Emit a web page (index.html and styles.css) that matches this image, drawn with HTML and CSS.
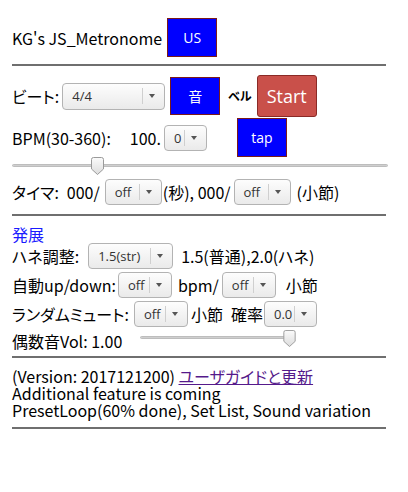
FILE: index.html
```html
<!DOCTYPE html>
<html lang="ja">
<head>
<meta charset="utf-8">
<title>KG's JS_Metronome</title>
<link rel="stylesheet" href="styles.css">
</head>
<body>
<div class="page">
  <div class="row r1">
    <span class="title">KG's JS_Metronome</span>
    <span class="btn blue b-us">US</span>
  </div>
  <hr class="rule">
  <div class="row r2">
    <span>ビート:</span>
    <span class="sel w-beat"><span class="v">4/4</span><span class="arr"></span></span>
    <span class="btn blue b-oto">音</span>
    <span class="bell">ベル</span>
    <span class="btn start">Start</span>
  </div>
  <div class="row r3">
    <span>BPM(30-360):</span>
    <span class="bpm">100.</span>
    <span class="sel w-dec"><span class="v">0</span><span class="arr"></span></span>
    <span class="btn blue b-tap">tap</span>
  </div>
  <div class="slider s-bpm">
    <div class="track"></div>
    <svg class="thumb" style="left:79px" width="13" height="18" viewBox="0 0 13 18"><defs><linearGradient id="tg" x1="0" y1="0" x2="0" y2="1"><stop offset="0" stop-color="#fbfbfb"/><stop offset="1" stop-color="#dcdcdc"/></linearGradient></defs><path d="M2.5 0.5 H10.5 Q12.5 0.5 12.5 2.5 V12 L6.5 17.5 L0.5 12 V2.5 Q0.5 0.5 2.5 0.5 Z" fill="url(#tg)" stroke="#9a9a9a"/></svg>
  </div>
  <div class="row r4">
    <span>タイマ:</span>
    <span class="ml8">000/</span>
    <span class="sel w-off57 ml5"><span class="v">off</span><span class="arr"></span></span>
    <span class="ml1">(秒), 000/</span>
    <span class="sel w-off57 ml3"><span class="v">off</span><span class="arr"></span></span>
    <span class="ml6">(小節)</span>
  </div>
  <hr class="rule rule2">
  <div class="dev">発展</div>
  <div class="row r5">
    <span>ハネ調整:</span>
    <span class="sel w-hane ml9"><span class="v">1.5(str)</span><span class="arr"></span></span>
    <span class="ml8">1.5(普通),2.0(ハネ)</span>
  </div>
  <div class="row r6">
    <span>自動up/down:</span>
    <span class="sel w-off54 ml2"><span class="v">off</span><span class="arr"></span></span>
    <span class="ml6">bpm/</span>
    <span class="sel w-off54 ml3"><span class="v">off</span><span class="arr"></span></span>
    <span class="ml10">小節</span>
  </div>
  <div class="row r6">
    <span>ランダムミュート:</span>
    <span class="sel w-off54 ml5"><span class="v">off</span><span class="arr"></span></span>
    <span class="ml3">小節</span>
    <span class="ml8">確率</span>
    <span class="sel w-rate ml1"><span class="v">0.0</span><span class="arr"></span></span>
  </div>
  <div class="row r7">
    <span>偶数音Vol: 1.00</span>
    <div class="slider s-vol">
      <div class="track"></div>
      <svg class="thumb" style="left:143px" width="13" height="17" viewBox="0 0 13 18"><defs><linearGradient id="tg2" x1="0" y1="0" x2="0" y2="1"><stop offset="0" stop-color="#fbfbfb"/><stop offset="1" stop-color="#dcdcdc"/></linearGradient></defs><path d="M2.5 0.5 H10.5 Q12.5 0.5 12.5 2.5 V12 L6.5 17.5 L0.5 12 V2.5 Q0.5 0.5 2.5 0.5 Z" fill="url(#tg2)" stroke="#9a9a9a"/></svg>
    </div>
  </div>
  <hr class="rule rule3">
  <div class="info">
    <div>(Version: 2017121200) <a class="guide" href="#">ユーザガイドと更新</a></div>
    <div>Additional feature is coming</div>
    <div>PresetLoop(60% done), Set List, Sound variation</div>
  </div>
  <hr class="rule rule4">
</div>
</body>
</html>
```

FILE: styles.css
```css
html, body {
  margin: 0;
  padding: 0;
  background: #ffffff;
}
body {
  font-family: "Noto Sans CJK JP", "Noto Sans", sans-serif;
  font-feature-settings: "palt";
  font-size: 16px;
  color: #000;
}
.page {
  display: flex;
  flex-direction: column;
  padding: 18px 20px 0 12px;
}
.row {
  display: flex;
  align-items: center;
  white-space: nowrap;
  line-height: 18px;
}
.r1 { height: 39px; }
.r2 { height: 42px; margin-top: 9px; }
.r3 { height: 39px; margin-top: 1px; }
.r4 { height: 26px; margin-top: 5px; }
.r5 { height: 26px; margin-top: 0; }
.r6 { height: 26px; margin-top: 3px; }
.r7 { height: 18px; margin-top: 5px; }

.title { margin-right: 5px; }

.rule {
  border: 0;
  height: 2px;
  margin: 7px 0 0 0;
  background: #6f6f6f;
  width: 374px;
}
.rule2 { margin-top: 9px; }
.rule3 { margin-top: 6px; }
.rule4 { margin-top: 8px; }

.btn {
  display: inline-flex;
  align-items: center;
  justify-content: center;
  box-sizing: border-box;
  font-family: "Open Sans", "Noto Sans CJK JP", sans-serif;
  font-size: 14px;
  color: #fff;
  border: 1px solid #7a1a1a;
}
.blue { background: #0000ff; width: 50px; height: 39px; }
.b-oto { height: 38px; margin-left: 5px; font-family: "Noto Sans CJK JP", sans-serif; font-size: 14px; }
.b-tap { margin-left: 30px; }
.bell { font-weight: bold; font-size: 12px; margin-left: 8px; }
.start {
  width: 60px;
  height: 42px;
  margin-left: 5px;
  background: #c9504a;
  border-color: #8a2a26;
  border-radius: 3px;
  font-size: 18px;
}

.sel {
  display: inline-flex;
  align-items: center;
  box-sizing: border-box;
  height: 26px;
  border: 1px solid #b3b3b3;
  border-radius: 4px;
  background: linear-gradient(#fdfdfd, #eaeaea);
  font-family: "Open Sans", "Noto Sans", sans-serif;
  font-feature-settings: normal;
  font-size: 13px;
  color: #333;
  padding-left: 9px;
}
.sel .v { flex: 1; }
.sel .arr {
  width: 21px;
  height: 16px;
  border-left: 1px solid #cfcfcf;
  position: relative;
}
.sel .arr::after {
  content: "";
  position: absolute;
  left: 6px;
  top: 6px;
  border-left: 3px solid transparent;
  border-right: 3px solid transparent;
  border-top: 4px solid #555;
}
.w-beat { width: 103px; height: 27px; margin-left: 3px; }
.w-dec { width: 43px; margin-left: 3px; }
.w-off57 { width: 57px; }
.w-off54 { width: 54px; }
.w-hane { width: 85px; }
.w-rate { width: 53px; }

.bpm { margin-left: 19px; }

.ml1 { margin-left: 1px; }
.ml2 { margin-left: 2px; }
.ml3 { margin-left: 3px; }
.ml5 { margin-left: 5px; }
.ml6 { margin-left: 6px; }
.ml8 { margin-left: 8px; }
.ml9 { margin-left: 9px; }
.ml10 { margin-left: 10px; }

.slider { position: relative; }
.slider .track {
  position: absolute;
  left: 0;
  right: 0;
  height: 3px;
  background: #cfcfcf;
  border: 1px solid #bdbdbd;
  border-radius: 2px;
  box-sizing: border-box;
}
.slider .thumb { position: absolute; }
.s-bpm { width: 376px; height: 16px; margin-top: 1px; }
.s-bpm .track { top: 6px; }
.s-bpm .thumb { top: -1px; }
.s-vol { width: 155px; height: 18px; margin-left: 18px; }
.s-vol .track { top: 4px; }
.s-vol .thumb { top: -2px; }

.dev {
  color: #1a1aff;
  height: 18px;
  line-height: 18px;
  margin-top: 9px;
}
.info {
  margin-top: 10px;
  line-height: 17px;
  white-space: nowrap;
}
.guide { color: #551a8b; text-decoration: underline; }
```
